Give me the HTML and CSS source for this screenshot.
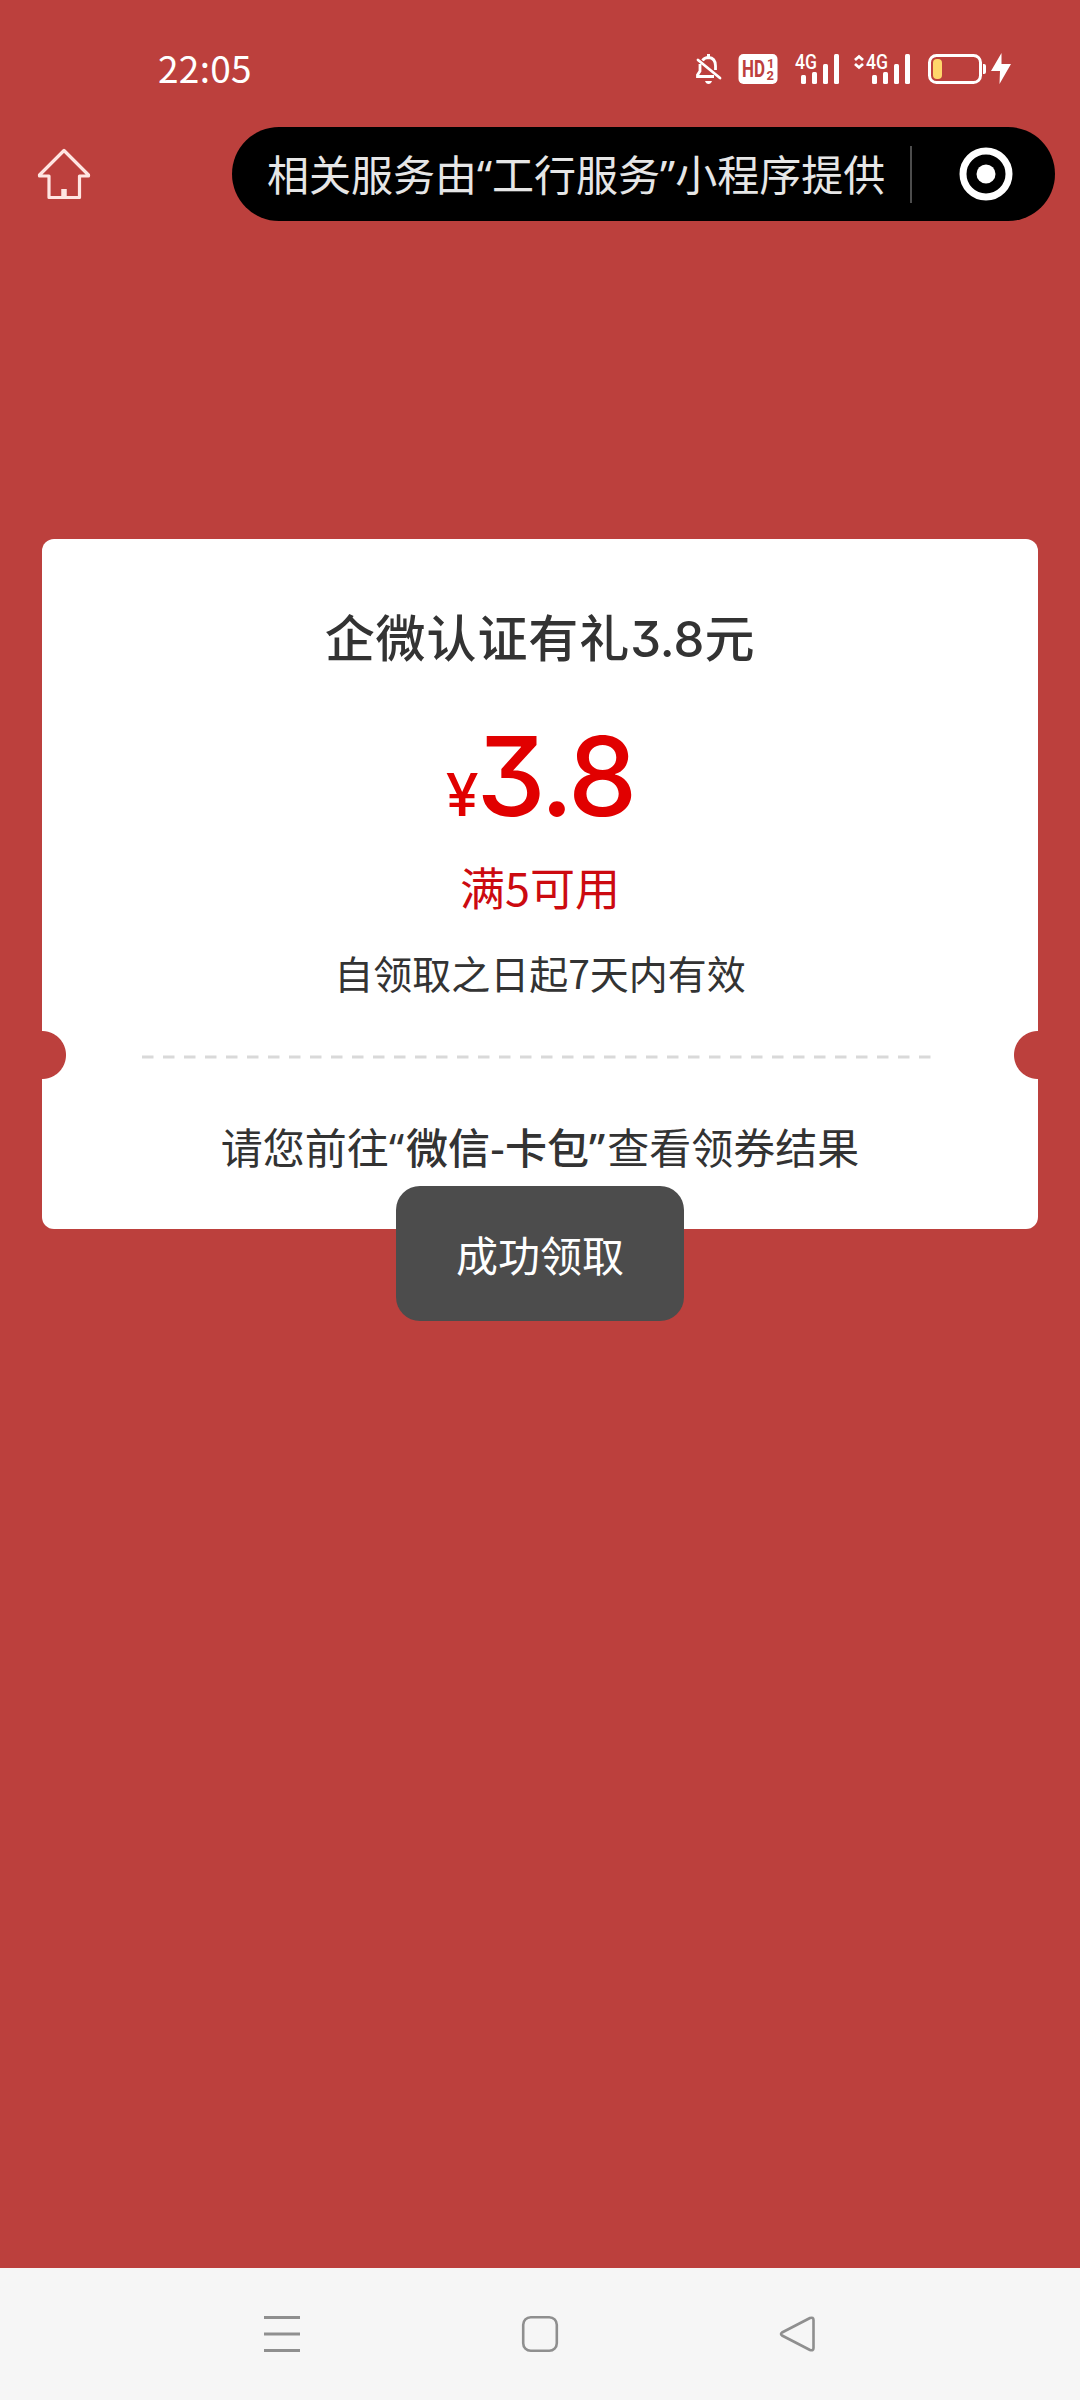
FILE: index.html
```html
<!DOCTYPE html>
<html lang="zh-CN">
<head>
<meta charset="utf-8">
<title>领取结果</title>
<link rel="stylesheet" href="styles.css">
</head>
<body>
<header class="status-bar">
  <span class="clock">22:05</span>
  <div class="status-icons">
    <svg class="icon-bell" width="28" height="32" viewBox="0 0 28 32">
      <path d="M8.500 7.500Q10.500 4.500 14.500 4.500Q21.500 5 21.500 13V17M6 11V18L3.500 22V23.500H20" fill="none" stroke="#fff" stroke-width="2.800"/>
      <path d="M14.500 1V5" stroke="#fff" stroke-width="3"/>
      <path d="M4 7L26 25" stroke="#fff" stroke-width="2.800" stroke-linecap="round"/>
      <path d="M11 28H18Q17 31 14.500 31Q12 31 11 28Z" fill="#fff"/>
    </svg>
    <svg class="icon-hd" width="40" height="32" viewBox="0 0 40 32">
      <rect x="0.500" y="1" width="39" height="30" rx="5" fill="#fff"/>
      <text class="hd-text" x="4" y="24" textLength="23" lengthAdjust="spacingAndGlyphs">HD</text>
      <text class="hd-digit" x="29" y="14.500">1</text>
      <text class="hd-digit" x="28.500" y="27">2</text>
    </svg>
    <svg class="icon-signal" width="46" height="32" viewBox="0 0 46 32">
      <text class="net-text" x="1" y="15.500" textLength="22" lengthAdjust="spacingAndGlyphs">4G</text>
      <g fill="#fff"><rect x="7" y="22" width="5" height="9" rx="1.500"/><rect x="18" y="19" width="5" height="12" rx="1.500"/><rect x="29" y="11" width="5" height="20" rx="1.500"/><rect x="40" y="1" width="5" height="30" rx="1.500"/></g>
    </svg>
    <svg class="icon-signal-data" width="58" height="32" viewBox="0 0 58 32">
      <path d="M2 7L6 3.500L10 7M2 11L6 14.500L10 11" fill="none" stroke="#fff" stroke-width="2.800"/>
      <text class="net-text" x="13" y="15.500" textLength="22" lengthAdjust="spacingAndGlyphs">4G</text>
      <g fill="#fff"><rect x="19" y="22" width="5" height="9" rx="1.500"/><rect x="30" y="19" width="5" height="12" rx="1.500"/><rect x="41" y="11" width="5" height="20" rx="1.500"/><rect x="52" y="1" width="5" height="30" rx="1.500"/></g>
    </svg>
    <svg class="icon-battery" width="86" height="32" viewBox="0 0 86 32">
      <rect x="2.500" y="2.500" width="51" height="27" rx="7" fill="none" stroke="#fff" stroke-width="3"/>
      <rect x="6" y="6" width="9" height="20" rx="4" fill="#ffd66b"/>
      <path d="M56 11H57Q59 11 59 13V19Q59 21 57 21H56Z" fill="#fff"/>
      <path d="M74.500 0L64 18H73L72.500 31L84 11H74.500Z" fill="#fff"/>
    </svg>
  </div>
</header>
<nav class="top-bar">
  <svg class="icon-home" width="56" height="56" viewBox="0 0 56 56">
    <path d="M28 4.500L3.500 29V30H13V51.500H43.500V30H52.500V29Z" fill="none" stroke="#ffe5e2" stroke-width="3.200" stroke-linejoin="round"/>
    <path d="M28 43V52" stroke="#ffe5e2" stroke-width="5.500"/>
  </svg>
  <div class="capsule">
    <span class="provider">相关服务由<span class="quote">“</span>工行服务<span class="quote">”</span>小程序提供</span>
    <span class="divider"></span>
    <svg class="icon-target" width="54" height="54" viewBox="0 0 54 54">
      <circle cx="27" cy="27" r="23" fill="none" stroke="#fff" stroke-width="7"/>
      <circle cx="27" cy="27" r="9.500" fill="#fff"/>
    </svg>
  </div>
</nav>
<main class="content">
  <section class="coupon">
    <h1 class="title">企微认证有礼<span class="title-num">3.8</span>元</h1>
    <div class="price"><span class="yen">¥</span><span class="amount">3.8</span></div>
    <p class="condition">满5可用</p>
    <p class="validity">自领取之日起7天内有效</p>
    <div class="tear"><svg width="790" height="4" viewBox="0 0 790 4"><path d="M0 2H790" stroke="#d9d9d9" stroke-width="3" stroke-dasharray="11.500 9.500"/></svg></div>
    <p class="hint">请您前往<span class="quote">“</span><b>微信<span class="dash">-</span>卡包</b><b class="quote">”</b>查看领券结果</p>
    <div class="toast">成功领取</div>
  </section>
</main>
<footer class="nav-bar">
  <svg width="38" height="38" viewBox="0 0 38 38"><path d="M1 2.500H37M1 19H37M1 35.500H37" stroke="#8f8f8f" stroke-width="3"/></svg>
  <svg width="38" height="38" viewBox="0 0 38 38"><rect x="2.200" y="2.200" width="33.600" height="33.600" rx="7.500" fill="none" stroke="#8f8f8f" stroke-width="2.600"/></svg>
  <svg width="38" height="38" viewBox="0 0 38 38"><path d="M31 3L3 17.500Q1 19 3 20.500L31 35Q34.500 36 34.500 33V5Q34.500 2 31 3Z" fill="none" stroke="#8f8f8f" stroke-width="2.600" stroke-linejoin="round"/></svg>
</footer>
</body>
</html>
```
FILE: styles.css
```css
* { box-sizing: border-box; }
body {
  margin: 0;
  width: 1080px;
  height: 2400px;
  display: flex;
  flex-direction: column;
  background: #bc403d;
  color: #333;
  font-family: "Noto Sans CJK SC", sans-serif;
  white-space: nowrap;
}
svg { display: block; flex: none; overflow: visible; }
h1, p { margin: 0; }
.status-bar {
  height: 127px;
  padding: 53px 67px 0 158px;
  display: flex;
  justify-content: space-between;
}
.clock { color: #fff; font-size: 37px; line-height: 28px; letter-spacing: 0.3px; }
.status-icons { display: flex; }
.icon-hd { margin-left: 16px; }
.icon-signal { margin-left: 16px; }
.icon-signal-data { margin-left: 13px; }
.icon-battery { margin-left: 16px; }
.hd-text { font: 700 23px Roboto, sans-serif; fill: #bc403d; }
.hd-digit { font: 700 13px/1 Roboto, sans-serif; fill: #bc403d; }
.net-text { font: 500 20px Roboto, sans-serif; fill: #fff; }
.top-bar {
  height: 94px;
  padding: 0 25px 0 36px;
  display: flex;
  align-items: center;
  justify-content: space-between;
}
.capsule {
  width: 823px;
  height: 94px;
  padding: 0 42px 0 35px;
  display: flex;
  align-items: center;
  background: #000;
  border-radius: 47px;
}
.provider { color: #e6e6e6; font-size: 42px; line-height: 88px; height: 90px; }
.quote { font-family: "Noto Sans", sans-serif; line-height: 1; }
.divider { width: 2px; height: 57px; margin-left: auto; margin-right: 47px; background: #4d4d4d; }
.content { flex: 1; padding: 318px 42px 0; }
.coupon {
  position: relative;
  height: 690px;
  padding-top: 59px;
  display: flex;
  flex-direction: column;
  align-items: center;
  border-radius: 12px;
  background:
    radial-gradient(circle at 0 516px, #bc403d 23.500px, transparent 24.500px),
    radial-gradient(circle at 100% 516px, #bc403d 23.500px, transparent 24.500px),
    #fff;
}
.title { font-size: 50px; font-weight: 500; line-height: 74px; letter-spacing: 0.9px; }
.title-num { font-family: Inter, sans-serif; font-feature-settings: "cv09"; font-size: 49px; line-height: 1; letter-spacing: 0; }
.price {
  height: 167px;
  display: flex;
  align-items: baseline;
  color: #e10000;
  font-family: Inter, sans-serif;
  font-weight: 500;
  font-feature-settings: "cv09";
  line-height: 209px;
}
.yen { font-size: 59px; letter-spacing: -2px; }
.amount { font-size: 110px; letter-spacing: -3px; }
.condition { color: #cc0a10; font-size: 45px; line-height: 96px; }
.validity { color: #333; font-size: 39px; line-height: 75px; }
.tear { height: 88px; padding-top: 45px; margin-right: 6px; }
.hint { font-size: 42px; line-height: 96px; }
.hint .quote { letter-spacing: 2px; }
.hint b { font-weight: 500; }
.toast {
  position: absolute;
  left: 354px;
  top: 647px;
  width: 288px;
  height: 135px;
  border-radius: 24px;
  background: #4c4c4c;
  color: #fff;
  font-size: 42px;
  line-height: 135px;
  text-align: center;
}
.nav-bar {
  height: 132px;
  padding: 47px 263px 0;
  display: flex;
  justify-content: space-between;
  background: #f6f6f6;
}
```
